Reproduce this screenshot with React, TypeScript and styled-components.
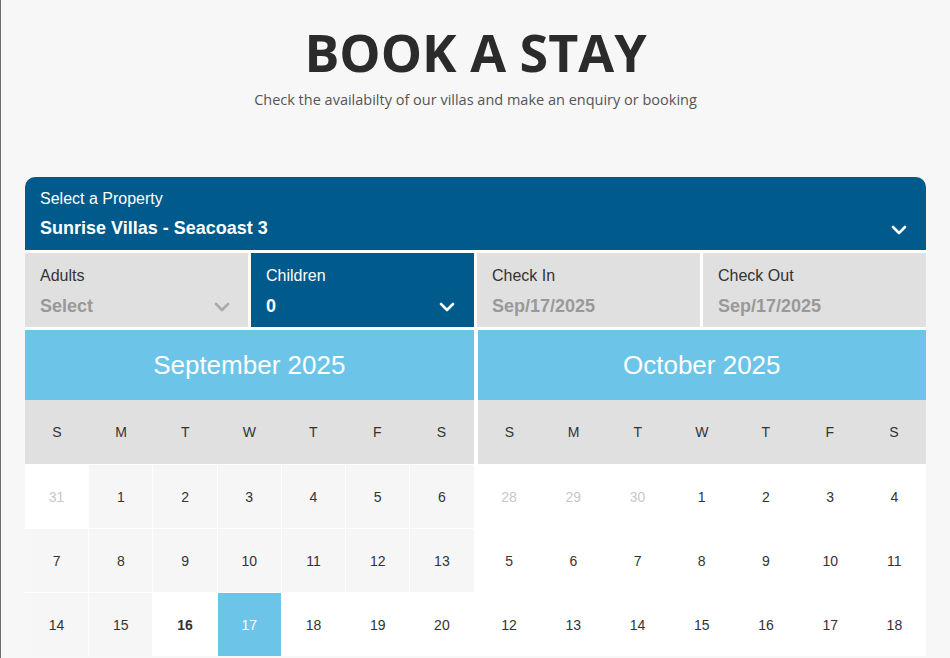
import React from 'react';
import styled, { createGlobalStyle } from 'styled-components';

const GlobalStyle = createGlobalStyle`
  html, body {
    margin: 0;
    padding: 0;
    background: #f7f7f7;
  }
  body {
    font-family: "Liberation Sans", Arial, sans-serif;
    color: #333;
  }
`;

const Page = styled.div`
  min-height: 658px;
  box-sizing: border-box;
  border-left: 1px solid #707070;
  padding: 0 24px 0 24px;
`;

const Hero = styled.header`
  text-align: center;
  padding-top: 20px;
  height: 177px;
  box-sizing: border-box;
`;

const Title = styled.h1`
  margin: 0;
  font-family: "Open Sans", sans-serif;
  font-weight: 700;
  font-size: 52px;
  line-height: 64px;
  color: #2b2b2b;
`;

const Subtitle = styled.p`
  margin: 6px 0 0;
  font-family: "Open Sans", sans-serif;
  font-size: 14.5px;
  color: #555;
`;

const Panel = styled.section`
  background: #fff;
  display: flex;
  flex-direction: column;
  gap: 3px;
  border-radius: 10px 10px 0 0;
  overflow: hidden;
`;

interface SelectProps {
  active?: boolean;
}

const PropertySelect = styled.div`
  background: #005a8c;
  color: #fff;
  height: 73px;
  box-sizing: border-box;
  padding: 12px 15px 0;
  position: relative;
`;

const FieldRow = styled.div`
  display: grid;
  grid-template-columns: repeat(4, 1fr);
  gap: 3px;
`;

const Field = styled.div<SelectProps>`
  background: ${(p) => (p.active ? '#005a8c' : '#e0e0e0')};
  color: ${(p) => (p.active ? '#fff' : '#333')};
  height: 74px;
  box-sizing: border-box;
  padding: 13px 15px 0;
  position: relative;
`;

const Label = styled.div`
  font-size: 16px;
  line-height: 20px;
`;

const Value = styled.div<{ muted?: boolean; large?: boolean }>`
  margin-top: ${(p) => (p.large ? '9px' : '10px')};
  font-size: 18px;
  font-weight: 700;
  line-height: 20px;
  color: ${(p) => (p.muted ? '#999' : 'inherit')};
`;

const Chevron = styled.svg<{ right: number; top: number }>`
  position: absolute;
  right: ${(p) => p.right}px;
  top: ${(p) => p.top}px;
`;

const Calendars = styled.div`
  display: grid;
  grid-template-columns: 1fr 1fr;
  gap: 4px;
`;

const Month = styled.div`
  display: flex;
  flex-direction: column;
`;

const MonthTitle = styled.div`
  background: #6cc5e8;
  color: #fff;
  height: 70px;
  display: flex;
  align-items: center;
  justify-content: center;
  font-size: 26px;
`;

const Weekdays = styled.div`
  display: grid;
  grid-template-columns: repeat(7, 1fr);
  background: #e0e0e0;
  height: 64px;
  align-items: center;
  text-align: center;
  font-size: 14px;
  color: #333;
`;

const Days = styled.div`
  display: grid;
  grid-template-columns: repeat(7, 1fr);
  grid-auto-rows: 63px;
  gap: 1px;
  padding-top: 1px;
  background: #fff;
`;

type DayKind = 'past' | 'other' | 'today' | 'selected' | 'open';

const Day = styled.div<{ kind: DayKind }>`
  display: flex;
  align-items: center;
  justify-content: center;
  font-size: 14px;
  background: ${(p) =>
    p.kind === 'past' ? '#f6f6f6' : p.kind === 'selected' ? '#6cc5e8' : '#fff'};
  color: ${(p) =>
    p.kind === 'other' ? '#c8c8c8' : p.kind === 'selected' ? '#fff' : '#333'};
  font-weight: ${(p) => (p.kind === 'today' ? 700 : 400)};
`;

function ChevronIcon({ color, right, top }: { color: string; right: number; top: number }) {
  return (
    <Chevron right={right} top={top} width="16" height="10" viewBox="0 0 16 10">
      <polyline points="2,2 8,8 14,2" fill="none" stroke={color} strokeWidth="2.6" strokeLinecap="round" strokeLinejoin="round" />
    </Chevron>
  );
}

const weekdays = ['S', 'M', 'T', 'W', 'T', 'F', 'S'];

interface CalDay {
  label: number;
  kind: DayKind;
}

const september: CalDay[] = [
  { label: 31, kind: 'other' },
  ...Array.from({ length: 15 }, (_, i) => ({ label: i + 1, kind: 'past' as DayKind })),
  { label: 16, kind: 'today' },
  { label: 17, kind: 'selected' },
  { label: 18, kind: 'open' },
  { label: 19, kind: 'open' },
  { label: 20, kind: 'open' },
];

const october: CalDay[] = [
  { label: 28, kind: 'other' },
  { label: 29, kind: 'other' },
  { label: 30, kind: 'other' },
  ...Array.from({ length: 18 }, (_, i) => ({ label: i + 1, kind: 'open' as DayKind })),
];

function Calendar({ title, days }: { title: string; days: CalDay[] }) {
  return (
    <Month>
      <MonthTitle>{title}</MonthTitle>
      <Weekdays>
        {weekdays.map((w, i) => (
          <div key={i}>{w}</div>
        ))}
      </Weekdays>
      <Days>
        {days.map((d, i) => (
          <Day key={i} kind={d.kind}>
            {d.label}
          </Day>
        ))}
      </Days>
    </Month>
  );
}

function App() {
  return (
    <Page>
      <GlobalStyle />
      <Hero>
        <Title>BOOK A STAY</Title>
        <Subtitle>Check the availabilty of our villas and make an enquiry or booking</Subtitle>
      </Hero>
      <Panel>
        <PropertySelect>
          <Label>Select a Property</Label>
          <Value large>Sunrise Villas - Seacoast 3</Value>
          <ChevronIcon color="#fff" right={19} top={48} />
        </PropertySelect>
        <FieldRow>
          <Field>
            <Label>Adults</Label>
            <Value muted>Select</Value>
            <ChevronIcon color="#aaa" right={18} top={49} />
          </Field>
          <Field active>
            <Label>Children</Label>
            <Value>0</Value>
            <ChevronIcon color="#fff" right={19} top={49} />
          </Field>
          <Field>
            <Label>Check In</Label>
            <Value muted>Sep/17/2025</Value>
          </Field>
          <Field>
            <Label>Check Out</Label>
            <Value muted>Sep/17/2025</Value>
          </Field>
        </FieldRow>
        <Calendars>
          <Calendar title="September 2025" days={september} />
          <Calendar title="October 2025" days={october} />
        </Calendars>
      </Panel>
    </Page>
  );
}

export default App;
